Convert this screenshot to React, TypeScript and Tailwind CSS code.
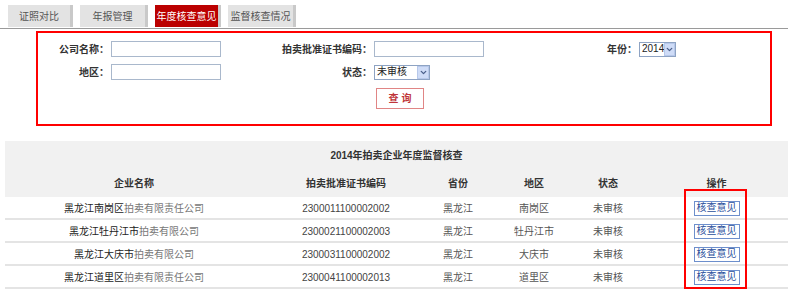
import { ChevronDown } from 'lucide-react'

const font = { fontFamily: '"Liberation Sans", "Noto Sans CJK SC", sans-serif' }

const tabs = [
  { label: '证照对比', w: 'w-[65px]', active: false },
  { label: '年报管理', w: 'w-[68px]', active: false },
  { label: '年度核查意见', w: 'w-[66px]', active: true },
  { label: '监督核查情况', w: 'w-[68px]', active: false },
]

const rows = [
  { head: '黑龙江南岗区', tail: '拍卖有限责任公司', code: '2300011100002002', area: '南岗区' },
  { head: '黑龙江牡丹江市', tail: '拍卖有限公司', code: '2300021100002003', area: '牡丹江市' },
  { head: '黑龙江大庆市', tail: '拍卖有限公司', code: '2300031100002002', area: '大庆市' },
  { head: '黑龙江道里区', tail: '拍卖有限责任公司', code: '2300041100002013', area: '道里区' },
]

const cols = 'grid grid-cols-[258px_166px_58px_94px_54px_1fr]'

function Select({ value, width }: { value: string; width: string }) {
  return (
    <div className={`ml-[2px] flex h-[15px] ${width} items-center border border-[#8ea3c3] bg-white font-normal`}>
      <span className="flex-1 pl-[2px] text-[10px] leading-none text-[#222]">{value}</span>
      <span className="flex h-[13px] w-[12px] items-center justify-center border border-[#b7c8ea] bg-[#cfdcf7]">
        <ChevronDown className="h-[9px] w-[9px] text-[#4a5f8a]" strokeWidth={3.5} />
      </span>
    </div>
  )
}

function Input() {
  return <div className="ml-[2px] h-[16px] w-[110px] border border-[#a9b8cc] bg-white" />
}

export default function App() {
  return (
    <div style={font} className="relative h-[292px] w-[788px] overflow-hidden bg-white">
      {/* tabs */}
      <div className="flex h-[29px] gap-[7px] border-b border-[#9a9a9a] pl-[8px] pt-[5px]">
        {tabs.map((t) => (
          <div
            key={t.label}
            className={`flex h-[22px] ${t.w} items-center justify-center border-r-[3px] border-[#c9c9c9] text-[10px] ${
              t.active ? 'bg-[#bb0000] text-white' : 'bg-[#e3e3e3] text-[#555]'
            }`}
          >
            {t.label}
          </div>
        ))}
      </div>

      {/* search form */}
      <div className="ml-[36px] mt-[2px] h-[95px] w-[736px] border-2 border-[#ff0000] pt-[8px] text-[10px] font-bold text-[#333]">
        <div className="flex h-[16px] items-center">
          <span className="w-[71px] text-right">公司名称：</span>
          <Input />
          <span className="w-[151px] text-right">拍卖批准证书编码：</span>
          <Input />
          <span className="w-[153px] text-right">年份：</span>
          <Select value="2014" width="w-[37px]" />
        </div>
        <div className="mt-[7px] flex h-[16px] items-center">
          <span className="w-[71px] text-right">地区：</span>
          <Input />
          <span className="w-[151px] text-right">状态：</span>
          <Select value="未审核" width="w-[56px]" />
        </div>
        <div className="mt-[8px] pl-[338px]">
          <button className="flex h-[21px] w-[48px] items-center justify-center border border-[#e08585] bg-white text-[10px] font-bold text-[#c0353a]">
            查&nbsp;询
          </button>
        </div>
      </div>

      {/* table */}
      <div className="ml-[5px] mt-[15px] text-[10px] text-[#333]">
        <div className="bg-[#f1f1f1] font-bold">
          <div className="flex h-[28px] items-center justify-center">2014年拍卖企业年度监督核查</div>
          <div className={`${cols} h-[28px] items-center text-center`}>
            <span>企业名称</span>
            <span>拍卖批准证书编码</span>
            <span>省份</span>
            <span>地区</span>
            <span>状态</span>
            <span className="pl-[10px]">操作</span>
          </div>
        </div>
        {rows.map((r) => (
          <div key={r.code} className={`${cols} h-[23px] items-center border-b-2 border-[#e4e4e4] pt-[1px] text-center`}>
            <span>
              <span className="text-[#222]">{r.head}</span>
              <span className="text-[#777]">{r.tail}</span>
            </span>
            <span className="text-[#444]">{r.code}</span>
            <span className="text-[#555]">黑龙江</span>
            <span className="text-[#555]">{r.area}</span>
            <span className="text-[#555]">未审核</span>
            <span className="flex justify-center pl-[10px]">
              <button className="flex h-[15px] w-[46px] items-center justify-center border border-[#6d8fcc] bg-white text-[10px] leading-none text-[#2a4f9c]">
                核查意见
              </button>
            </span>
          </div>
        ))}
      </div>

      {/* highlight around actions */}
      <div className="absolute left-[684px] top-[189px] h-[100px] w-[63px] border-2 border-[#ff0000]" />
    </div>
  )
}
